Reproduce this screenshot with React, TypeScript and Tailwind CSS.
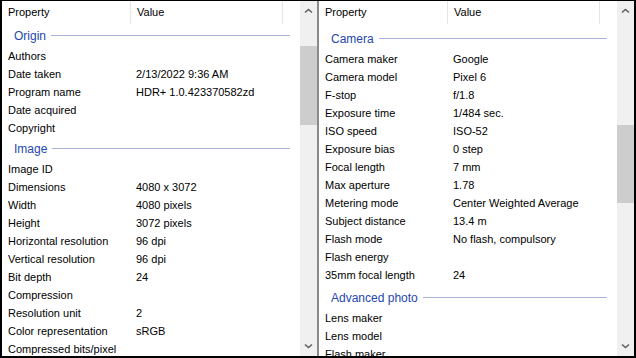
import React from "react";

type Item = { kind: "row"; p: string; v?: string } | { kind: "head"; t: string; tall?: boolean };

const leftItems: Item[] = [
  { kind: "head", t: "Origin" },
  { kind: "row", p: "Authors" },
  { kind: "row", p: "Date taken", v: "2/13/2022 9:36 AM" },
  { kind: "row", p: "Program name", v: "HDR+ 1.0.423370582zd" },
  { kind: "row", p: "Date acquired" },
  { kind: "row", p: "Copyright" },
  { kind: "head", t: "Image" },
  { kind: "row", p: "Image ID" },
  { kind: "row", p: "Dimensions", v: "4080 x 3072" },
  { kind: "row", p: "Width", v: "4080 pixels" },
  { kind: "row", p: "Height", v: "3072 pixels" },
  { kind: "row", p: "Horizontal resolution", v: "96 dpi" },
  { kind: "row", p: "Vertical resolution", v: "96 dpi" },
  { kind: "row", p: "Bit depth", v: "24" },
  { kind: "row", p: "Compression" },
  { kind: "row", p: "Resolution unit", v: "2" },
  { kind: "row", p: "Color representation", v: "sRGB" },
  { kind: "row", p: "Compressed bits/pixel" },
];

const rightItems: Item[] = [
  { kind: "head", t: "Camera" },
  { kind: "row", p: "Camera maker", v: "Google" },
  { kind: "row", p: "Camera model", v: "Pixel 6" },
  { kind: "row", p: "F-stop", v: "f/1.8" },
  { kind: "row", p: "Exposure time", v: "1/484 sec." },
  { kind: "row", p: "ISO speed", v: "ISO-52" },
  { kind: "row", p: "Exposure bias", v: "0 step" },
  { kind: "row", p: "Focal length", v: "7 mm" },
  { kind: "row", p: "Max aperture", v: "1.78" },
  { kind: "row", p: "Metering mode", v: "Center Weighted Average" },
  { kind: "row", p: "Subject distance", v: "13.4 m" },
  { kind: "row", p: "Flash mode", v: "No flash, compulsory" },
  { kind: "row", p: "Flash energy" },
  { kind: "row", p: "35mm focal length", v: "24" },
  { kind: "head", t: "Advanced photo", tall: true },
  { kind: "row", p: "Lens maker" },
  { kind: "row", p: "Lens model" },
  { kind: "row", p: "Flash maker" },
];

function Chevron({ down }: { down?: boolean }) {
  return (
    <svg width="9" height="6" viewBox="0 0 9 6">
      <polyline
        points={down ? "1,1.5 4.5,4.5 8,1.5" : "1,4.5 4.5,1.5 8,4.5"}
        fill="none"
        stroke="#606060"
        strokeWidth="1.6"
      />
    </svg>
  );
}

function ScrollBar({ before, thumb }: { before: number; thumb: number }) {
  return (
    <div className="flex w-[17px] shrink-0 flex-col bg-[#f0f0f0]">
      <div className="flex h-[20px] items-center justify-center">
        <Chevron />
      </div>
      <div style={{ height: before }} />
      <div className="bg-[#cdcdcd]" style={{ height: thumb }} />
      <div className="flex-1" />
      <div className="flex h-[20px] items-center justify-center">
        <Chevron down />
      </div>
    </div>
  );
}

function Panel({ items, offset }: { items: Item[]; offset: number }) {
  return (
    <div className="flex min-w-0 flex-1 flex-col overflow-hidden bg-white">
      <div className="flex h-[23px] shrink-0 items-center">
        <div className="w-[128px] pl-[6px]">Property</div>
        <div className="h-[23px] w-px bg-[#e5e5e5]" />
        <div className="w-[151px] pl-[6px]">Value</div>
        <div className="h-[23px] w-px bg-[#e5e5e5]" />
      </div>
      <div className="flex flex-col" style={{ paddingTop: offset }}>
        {items.map((it, i) =>
          it.kind === "head" ? (
            <div
              key={i}
              className={
                it.tall
                  ? "flex h-[25px] shrink-0 items-center pl-[12px] pr-[10px] pt-[2px]"
                  : "flex h-[23px] shrink-0 items-center pl-[12px] pr-[10px]"
              }
            >
              <span className="text-[12px] text-[#2447b0]">{it.t}</span>
              <div className="ml-[5px] h-px flex-1 bg-[#a9b2d8]" />
            </div>
          ) : (
            <div key={i} className="flex h-[18px] shrink-0 items-center">
              <div className="w-[129px] whitespace-nowrap pl-[6px]">{it.p}</div>
              <div className="whitespace-nowrap pl-[5px]">{it.v ?? ""}</div>
            </div>
          )
        )}
      </div>
    </div>
  );
}

export default function App() {
  return (
    <div
      className="flex h-[358px] w-[636px] overflow-hidden border-b-2 border-l-2 border-r-2 border-t border-black bg-white text-[11px] text-black"
      style={{ fontFamily: '"Liberation Sans", Arial, sans-serif' }}
    >
      <Panel items={leftItems} offset={0} />
      <ScrollBar before={25} thumb={79} />
      <div className="w-[2px] shrink-0 bg-[#8a8a8a]" />
      <Panel items={rightItems} offset={3} />
      <ScrollBar before={104} thumb={78} />
    </div>
  );
}
